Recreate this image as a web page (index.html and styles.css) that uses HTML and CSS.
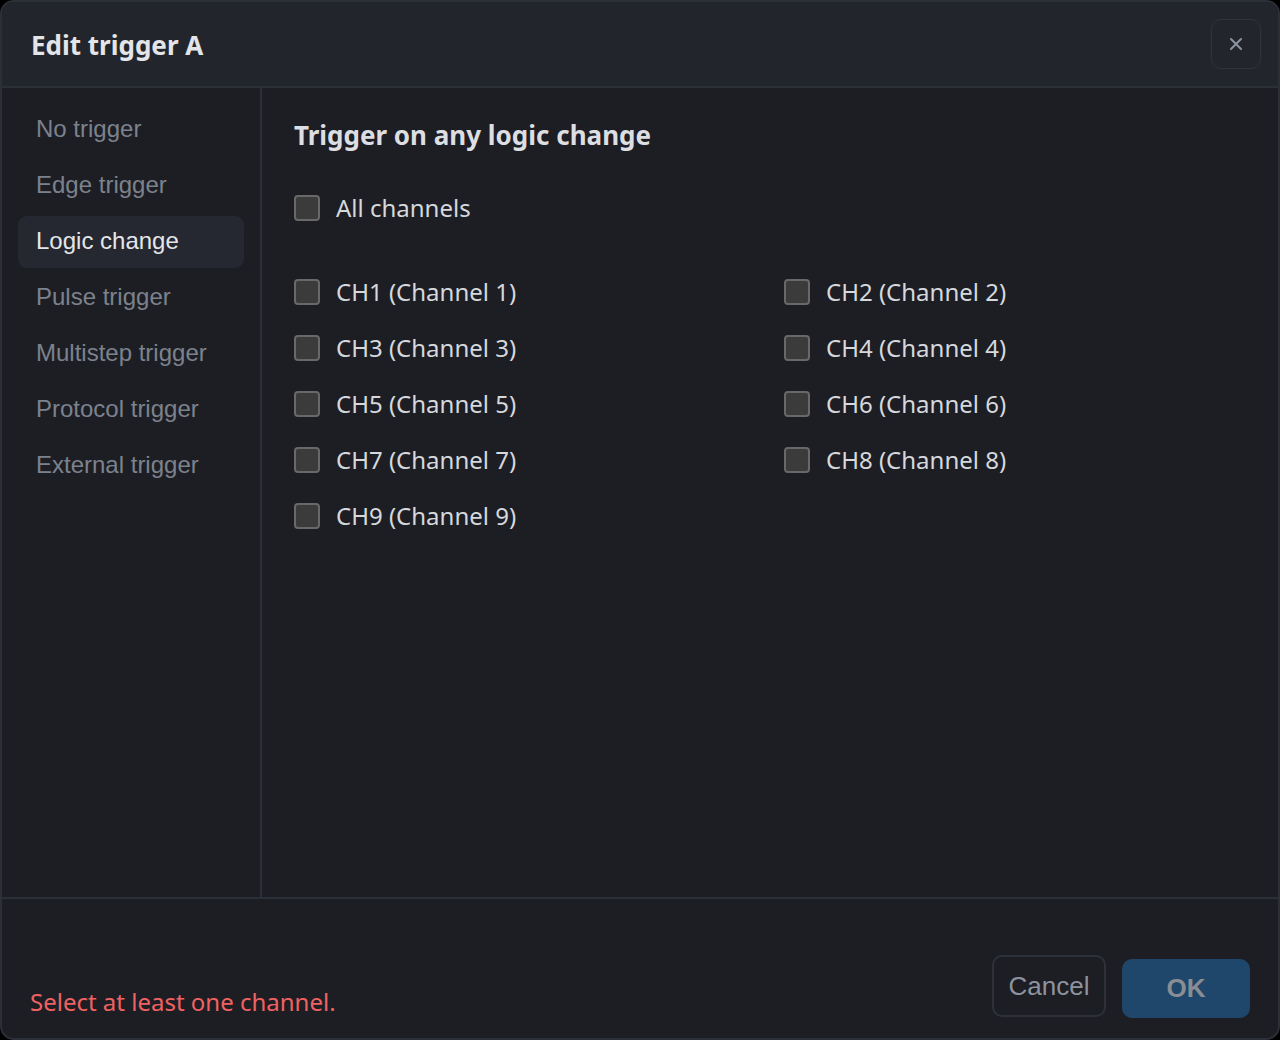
FILE: index.html
```html
<!DOCTYPE html>
<html lang="en">
<head>
<meta charset="utf-8">
<title>Edit trigger A</title>
<link rel="stylesheet" href="styles.css">
</head>
<body>
<div class="dialog">
  <header class="dlg-header">
    <h1 class="dlg-title">Edit trigger A</h1>
    <button class="close-btn" aria-label="Close">
      <svg width="14" height="14" viewBox="0 0 14 14"><path d="M2 2 L12 12 M12 2 L2 12" stroke="#8d939e" stroke-width="2" stroke-linecap="round"/></svg>
    </button>
  </header>
  <div class="dlg-main">
    <nav class="sidebar">
      <div class="nav-item">No trigger</div>
      <div class="nav-item">Edge trigger</div>
      <div class="nav-item active">Logic change</div>
      <div class="nav-item">Pulse trigger</div>
      <div class="nav-item">Multistep trigger</div>
      <div class="nav-item">Protocol trigger</div>
      <div class="nav-item">External trigger</div>
    </nav>
    <section class="content">
      <h2 class="section-title">Trigger on any logic change</h2>
      <label class="check-row all"><span class="box"></span><span>All channels</span></label>
      <div class="channel-grid">
        <label class="check-row"><span class="box"></span><span>CH1 (Channel 1)</span></label>
        <label class="check-row"><span class="box"></span><span>CH2 (Channel 2)</span></label>
        <label class="check-row"><span class="box"></span><span>CH3 (Channel 3)</span></label>
        <label class="check-row"><span class="box"></span><span>CH4 (Channel 4)</span></label>
        <label class="check-row"><span class="box"></span><span>CH5 (Channel 5)</span></label>
        <label class="check-row"><span class="box"></span><span>CH6 (Channel 6)</span></label>
        <label class="check-row"><span class="box"></span><span>CH7 (Channel 7)</span></label>
        <label class="check-row"><span class="box"></span><span>CH8 (Channel 8)</span></label>
        <label class="check-row"><span class="box"></span><span>CH9 (Channel 9)</span></label>
      </div>
    </section>
  </div>
  <footer class="dlg-footer">
    <div class="error">Select at least one channel.</div>
    <div class="actions">
      <button class="btn cancel">Cancel</button>
      <button class="btn ok">OK</button>
    </div>
  </footer>
</div>
</body>
</html>
```
FILE: styles.css
```css
* { box-sizing: border-box; }
html, body { margin: 0; padding: 0; background: #000; }
body { width: 1280px; height: 1040px; }

.dialog {
  width: 1280px;
  height: 1040px;
  border: 2px solid #2b2f37;
  border-radius: 14px;
  overflow: hidden;
  background: #1c1e24;
  display: flex;
  flex-direction: column;
  font-family: "Noto Sans", "Open Sans", sans-serif;
}

.dlg-header {
  height: 86px;
  flex: none;
  background: #22252c;
  border-bottom: 2px solid #2b2f37;
  display: flex;
  align-items: center;
  justify-content: space-between;
  padding: 0 17px 0 29px;
}
.dlg-title {
  margin: 0;
  font-size: 26px;
  line-height: 34px;
  font-weight: 700;
  color: #e3e5e9;
  padding-top: 2px;
}
.close-btn {
  width: 50px;
  height: 50px;
  border: 1px solid #2f333b;
  border-radius: 10px;
  background: #22252c;
  display: flex;
  align-items: center;
  justify-content: center;
  padding: 0;
}

.dlg-main {
  flex: 1;
  display: flex;
  border-bottom: 2px solid #2b2f37;
  min-height: 0;
}
.sidebar {
  width: 260px;
  flex: none;
  border-right: 2px solid #2b2f37;
  padding: 16px 16px;
  display: flex;
  flex-direction: column;
  gap: 4px;
}
.nav-item {
  height: 52px;
  display: flex;
  align-items: center;
  padding-left: 18px;
  padding-bottom: 2px;
  border-radius: 9px;
  font-family: "Liberation Sans", Arial, sans-serif;
  font-size: 24px;
  color: #7c828d;
}
.nav-item.active {
  background: #252830;
  color: #e4e6ea;
}

.content {
  flex: 1;
  padding: 29px 32px;
}
.section-title {
  margin: 0 0 35px;
  font-size: 26px;
  line-height: 36px;
  font-weight: 700;
  color: #dcdee2;
}
.check-row {
  display: flex;
  align-items: center;
  gap: 16px;
  height: 40px;
  font-size: 24px;
  color: #d6d8dc;
}
.check-row > span:last-child { margin-top: -2px; }
.check-row.all { margin-bottom: 44px; }
.box {
  width: 26px;
  height: 26px;
  flex: none;
  border: 2px solid #686868;
  border-radius: 4px;
  background: #3b3b3b;
}
.channel-grid {
  display: grid;
  grid-template-columns: 490px 490px;
  row-gap: 16px;
}

.dlg-footer {
  height: 139px;
  flex: none;
  display: flex;
  justify-content: space-between;
  align-items: flex-end;
  padding: 0 28px 20px 28px;
}
.error {
  font-size: 24px;
  line-height: 32px;
  color: #f06262;
}
.actions {
  display: flex;
  align-items: flex-end;
  gap: 16px;
}
.btn {
  font-family: "Liberation Sans", Arial, sans-serif;
  font-size: 26px;
  border-radius: 10px;
  padding: 0;
}
.cancel {
  height: 62px;
  width: 114px;
  margin-bottom: 1px;
  background: #1c1e24;
  border: 2px solid #2d3139;
  color: #8d939e;
}
.ok {
  height: 59px;
  width: 128px;
  background: #1e476b;
  border: none;
  color: #8a8d92;
  font-weight: 700;
}
```
